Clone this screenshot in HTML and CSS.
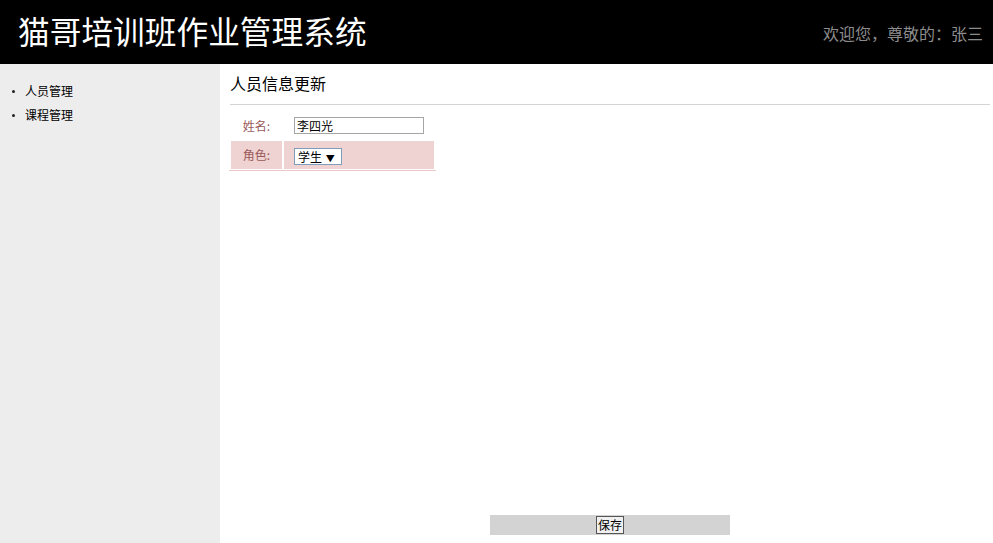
FILE: index.html
```html
<!DOCTYPE html>
<html lang="zh-CN">
<head>
<meta charset="utf-8">
<title>猫哥培训班作业管理系统</title>
<link rel="stylesheet" href="styles.css">
</head>
<body>
<div class="page">
  <header class="top">
    <h1 class="brand">猫哥培训班作业管理系统</h1>
    <div class="welcome">欢迎您，尊敬的：张三</div>
  </header>
  <div class="body">
    <nav class="side">
      <ul class="menu">
        <li>人员管理</li>
        <li>课程管理</li>
      </ul>
    </nav>
    <main class="main">
      <h2 class="title">人员信息更新</h2>
      <div class="content">
        <table class="form">
          <tr class="row">
            <td class="label">姓名:</td>
            <td class="field"><input class="text" type="text" value="李四光"></td>
          </tr>
          <tr class="row alt">
            <td class="label">角色:</td>
            <td class="field"><span class="select">学生 <span class="arrow">▼</span></span></td>
          </tr>
        </table>
      </div>
      <div class="actions"><button class="save">保存</button></div>
    </main>
  </div>
</div>
</body>
</html>
```

FILE: styles.css
```css
html, body {
  margin: 0;
  padding: 0;
  height: 100%;
}
body {
  font-family: "Liberation Sans", "Noto Sans CJK SC", sans-serif;
  font-size: 12px;
  color: #000;
}
.page {
  display: flex;
  flex-direction: column;
  height: 100vh;
}
.top {
  height: 64px;
  background: #000;
  display: flex;
  align-items: center;
  justify-content: space-between;
  padding: 0 10px 0 18px;
  flex: none;
}
.brand {
  margin: 0;
  font-family: "Noto Sans CJK SC", sans-serif;
  font-weight: 400;
  font-size: 31.7px;
  color: #fff;
  line-height: 1;
  padding-bottom: 2px;
}
.welcome {
  color: #8c8c8c;
  font-size: 16px;
  font-family: "Noto Sans CJK SC", sans-serif;
  padding-top: 1px;
}
.body {
  flex: 1;
  display: flex;
  min-height: 0;
}
.side {
  width: 220px;
  background: #ededed;
  flex: none;
}
.menu {
  margin: 17px 0 0 0;
  padding: 0 0 0 25px;
  list-style: none;
  font-family: "Noto Sans CJK SC", sans-serif;
  font-size: 12px;
}
.menu li {
  height: 24px;
  line-height: 20px;
  position: relative;
}
.menu li::before {
  content: "";
  position: absolute;
  left: -13px;
  top: 9px;
  width: 3px;
  height: 3px;
  background: #222;
  border-radius: 50%;
}
.main {
  flex: 1;
  display: flex;
  flex-direction: column;
  padding: 0 3px 8px 10px;
}
.title {
  margin: 7px 0 0 0;
  font-family: "Noto Sans CJK SC", sans-serif;
  font-weight: 400;
  font-size: 16px;
  line-height: 24px;
  padding-bottom: 9px;
  border-bottom: 1px solid #d4d4d4;
}
.content {
  flex: 1;
  padding-top: 9px;
}
.form {
  border-collapse: separate;
  border-spacing: 2px 1px;
  border-bottom: 1px solid #ecc8c8;
  margin-left: -1px;
}
.row td {
  height: 23px;
  padding: 2px 0 0 0;
  font-family: "Noto Sans CJK SC", sans-serif;
  vertical-align: top;
}
.row.alt td {
  height: 28px;
  padding-top: 0;
  background: #efd2d2;
  vertical-align: middle;
}
.row .label {
  width: 51px;
  text-align: center;
  color: #9a5a5a;
  font-size: 12px;
  line-height: 18px;
}
.row .field {
  width: 141px;
  padding-left: 9px;
}
.text {
  width: 124px;
  height: 15px;
  border: 1px solid #a5a5a5;
  padding: 0 2px;
  margin: 0 0 0 1px;
  font-family: "Noto Sans CJK SC", sans-serif;
  font-size: 12px;
  vertical-align: top;
  box-sizing: content-box;
}
.select {
  display: inline-block;
  margin-left: 1px;
  width: 42px;
  height: 15px;
  line-height: 15px;
  border: 1px solid #7f9db9;
  background: #fff;
  padding: 0 1px 0 3px;
  font-size: 12px;
  vertical-align: middle;
}
.arrow {
  font-size: 9px;
  margin-left: 1px;
}
.actions {
  align-self: center;
  width: 240px;
  height: 20px;
  background: #d3d3d3;
  display: flex;
  justify-content: center;
  align-items: center;
}
.save {
  font-family: "Noto Sans CJK SC", sans-serif;
  font-size: 12px;
  padding: 0 1px;
  height: 18px;
  line-height: 14px;
  border: 1px solid #555;
  background: #f0f0f0;
  border-radius: 0;
}
```
